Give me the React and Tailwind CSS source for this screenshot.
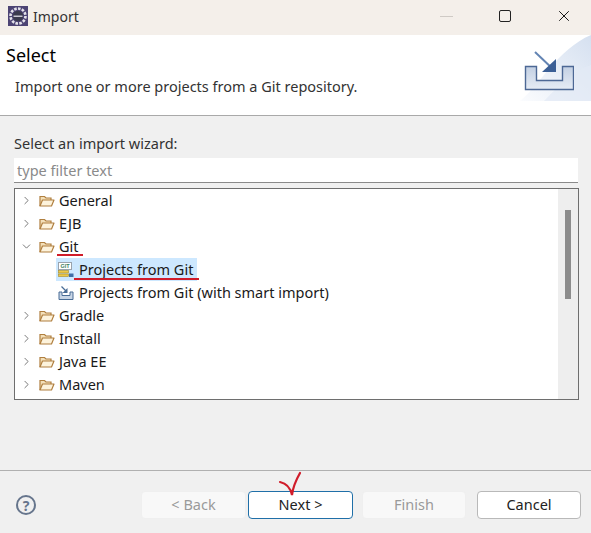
import React from 'react';
import { ChevronRight, ChevronDown, X } from 'lucide-react';

const FONT = "font-['Noto_Sans','Liberation_Sans',sans-serif]";

const AppIcon = () => (
  <svg width="20" height="20" viewBox="0 0 20 20" className="shrink-0">
    <rect width="20" height="20" fill="#4d4474" />
    <circle cx="10" cy="10" r="7.5" fill="none" stroke="#e4e2ea" strokeWidth="2.6" strokeDasharray="2.6 1.3" />
    <circle cx="10" cy="10" r="5.2" fill="#3b3a4e" />
    <path d="M5.5 9.500h9v1.500h-9Z" fill="#c9c7d2" />
  </svg>
);

const FolderIcon = () => (
  <svg width="16" height="14" viewBox="0 0 16 14" className="shrink-0">
    <path d="M1 12V2.500h4.500L7 4h5v2" fill="#f3dfb8" stroke="#b07f3f" strokeWidth="1.200" />
    <path d="M1 12 3.500 6H15l-2.500 6Z" fill="#fdf3dc" stroke="#b07f3f" strokeWidth="1.200" strokeLinejoin="round" />
  </svg>
);

const GitIcon = () => (
  <svg width="16" height="16" viewBox="0 0 16 16" className="shrink-0">
    <rect x="0.500" y="0.500" width="13" height="7" fill="#fff" stroke="#9aa3ad" />
    <text x="7" y="6" fontSize="5.500" fontWeight="700" textAnchor="middle" fill="#3f7f5f" fontFamily="Liberation Sans, sans-serif">GIT</text>
    <rect x="0.500" y="8.500" width="10" height="2.500" fill="#ecc94a" stroke="#a58a2a" strokeWidth="0.600" />
    <rect x="0.500" y="12" width="10" height="2.500" fill="#ecc94a" stroke="#a58a2a" strokeWidth="0.600" />
    <path d="M11 11.500h4.500v3.500H11Z" fill="#3f6fa8" />
  </svg>
);

const SmartIcon = () => (
  <svg width="16" height="16" viewBox="0 0 16 16" className="shrink-0">
    <path d="M1 7h3v3.500h8V7h3v7.500H1Z" fill="#c9d6e6" stroke="#4a6d96" />
    <path d="M3.500 1.500l5 5" stroke="#4a6d96" strokeWidth="1.300" />
    <path d="M9.500 3v5h-5Z" fill="#4a6d96" />
  </svg>
);

// curved wash behind the banner picture
const BannerWash = () => (
  <svg width="71" height="66" viewBox="0 0 71 66">
    <defs>
      <linearGradient id="wash" x1="0" y1="1" x2="1" y2="0">
        <stop offset="0" stopColor="#fbfcfe" />
        <stop offset="1" stopColor="#d5e0f0" />
      </linearGradient>
    </defs>
    <path d="M0 66C20 50 38 14 71 0V66Z" fill="url(#wash)" />
    <path d="M24 66C40 50 52 36 71 30V66Z" fill="#e3eaf5" opacity="0.700" />
  </svg>
);

const BannerIcon = () => (
  <svg width="50" height="40" viewBox="0 0 50 40">
    <defs>
      <linearGradient id="tray" x1="0" y1="0" x2="0" y2="1">
        <stop offset="0" stopColor="#c3d0e3" />
        <stop offset="1" stopColor="#e6ecf5" />
      </linearGradient>
    </defs>
    <path d="M1.500 15.500h11v14h26v-14h11v23h-48Z" fill="url(#tray)" stroke="#4d6895" strokeWidth="1.400" />
    <path d="M11 1l20 19" stroke="#6384b3" strokeWidth="2" />
    <path d="M32 8v13H18Z" fill="#3b5f96" />
  </svg>
);

const rows = [
  { label: 'General', folder: true },
  { label: 'EJB', folder: true },
  { label: 'Git', folder: true, open: true },
  { label: 'Projects from Git', child: 'git', selected: true },
  { label: 'Projects from Git (with smart import)', child: 'smart' },
  { label: 'Gradle', folder: true },
  { label: 'Install', folder: true },
  { label: 'Java EE', folder: true },
  { label: 'Maven', folder: true },
];

const TreeRow = ({ row }) => (
  <div className="flex h-[23px] items-center text-[#1a1a1a]">
    {row.folder ? (
      <>
        <span className="ml-[2px] w-[14px] text-[#666]">
          {row.open ? <ChevronDown size={13} strokeWidth={1.6} /> : <ChevronRight size={13} strokeWidth={1.6} />}
        </span>
        <span className="ml-[5px]"><FolderIcon /></span>
        <span className="ml-[4px]">{row.label}</span>
      </>
    ) : (
      <div className={`ml-[38px] flex h-[23px] items-center pl-[2px] pr-[4px] ${row.selected ? 'bg-[#cde8ff]' : ''}`}>
        {row.child === 'git' ? <GitIcon /> : <SmartIcon />}
        <span className="ml-[5px]">{row.label}</span>
      </div>
    )}
  </div>
);

const WizardButton = ({ children, disabled, primary, className }) => (
  <button
    className={`h-[28px] rounded-[4px] border text-[14.5px] ${className} ${
      primary
        ? 'border-[#1f6fa8] bg-white text-[#222]'
        : disabled
          ? 'border-[#efefef] bg-[#f8f8f8] text-[#9a9a9a]'
          : 'border-[#b9b9b9] bg-white text-[#222]'
    }`}
  >
    {children}
  </button>
);

export default function App() {
  return (
    <div className={`relative flex h-[533px] w-[591px] flex-col overflow-hidden bg-[#f0f0f0] text-[14.5px] ${FONT}`}>
      {/* title bar */}
      <div className="flex h-[35px] shrink-0 items-center bg-[#f4efea] pb-[3px]">
        <div className="ml-[8px]"><AppIcon /></div>
        <span className="ml-[5px] text-[14px] text-[#333]">Import</span>
        <div className="ml-auto h-[1px] w-[13px] bg-[#cfcac5]" />
        <div className="ml-[46px] h-[12px] w-[12px] rounded-[2px] border-[1.5px] border-[#222]" />
        <X size={18} strokeWidth={1.300} className="ml-[44px] mr-[18px] text-[#111]" />
      </div>

      {/* banner */}
      <div className="relative flex h-[81px] shrink-0 flex-col border-b border-[#a9a9a9] bg-white pl-[6px]">
        <div className="mt-[9px] text-[18px] leading-[22px] text-black">Select</div>
        <div className="ml-[9px] mt-[11px] leading-[18px] text-[#333]">Import one or more projects from a Git repository.</div>
        <div className="absolute right-0 top-0"><BannerWash /></div>
        <div className="absolute left-[524px] top-[16px]"><BannerIcon /></div>
      </div>

      {/* wizard body */}
      <div className="flex flex-col px-[14px] pt-[17px]">
        <div className="h-[20px] leading-[20px] text-[#333]">Select an import wizard:</div>
        <input
          readOnly
          placeholder="type filter text"
          className="mt-[5px] h-[25px] w-[564px] border-b border-[#8a8a8a] bg-white pl-[3px] placeholder:text-[#8a8a8a]"
        />
        <div className="mt-[5px] flex h-[212px] w-[565px] border border-[#6e6e6e] bg-white">
          <div className="flex-1 overflow-hidden pl-[3px]">
            {rows.map((row) => (
              <TreeRow key={row.label} row={row} />
            ))}
          </div>
          <div className="w-[20px] bg-[#eeeeee] pl-[7px] pt-[21px]">
            <div className="h-[89px] w-[6px] bg-[#8c8c8c]" />
          </div>
        </div>
      </div>

      {/* footer */}
      <div className="mt-auto h-[63px] shrink-0 border-t border-[#b0b0b0]">
        <div className="flex items-center pt-[20px]">
          <div className="ml-[16px] flex h-[20px] w-[20px] items-center justify-center rounded-full border-2 border-[#66758c] text-[14px] font-bold text-[#66758c]">?</div>
          <WizardButton disabled className="ml-[105px] w-[105px]">&lt; Back</WizardButton>
          <WizardButton primary className="ml-[2px] w-[105px]">Next &gt;</WizardButton>
          <WizardButton disabled className="ml-[9px] w-[104px]">Finish</WizardButton>
          <WizardButton className="ml-[11px] w-[104px]">Cancel</WizardButton>
        </div>
      </div>

      {/* red marks drawn on the screenshot */}
      <svg width="591" height="533" className="pointer-events-none absolute left-0 top-0">
        <path d="M57 255h26" stroke="#d01c2a" strokeWidth="2" fill="none" />
        <path d="M74 279h125" stroke="#d01c2a" strokeWidth="2" fill="none" />
        <path d="M280 482c5 1 10 4 12 13 1-8 4-15 8-22" stroke="#d01c2a" strokeWidth="2.200" fill="none" strokeLinecap="round" />
      </svg>
    </div>
  );
}
